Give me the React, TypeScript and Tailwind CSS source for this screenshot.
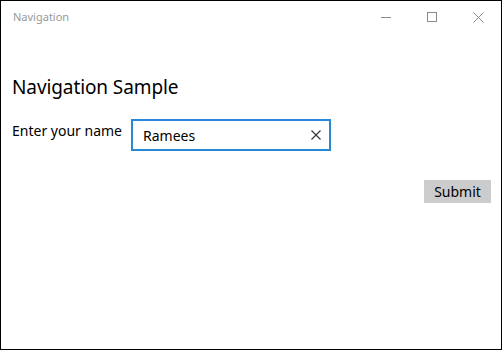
import React from "react";

export default function App() {
  return (
    <div
      className="w-[502px] h-[350px] border border-black bg-white flex flex-col"
      style={{ fontFamily: '"Noto Sans", "Open Sans", sans-serif' }}
    >
      <div className="h-[32px] flex items-center shrink-0">
        <div className="pl-[12px] text-[11px] text-[#999999] flex-1">Navigation</div>
        <div className="flex h-full">
          <div className="w-[46px] h-full flex items-center justify-center">
            <svg width="10" height="10" viewBox="0 0 10 10">
              <path d="M0 5.5H10" stroke="#8a8a8a" strokeWidth="1" />
            </svg>
          </div>
          <div className="w-[46px] h-full flex items-center justify-center">
            <svg width="10" height="10" viewBox="0 0 10 10">
              <rect x="0.5" y="0.5" width="9" height="9" fill="none" stroke="#8a8a8a" strokeWidth="1" />
            </svg>
          </div>
          <div className="w-[46px] h-full flex items-center justify-center">
            <svg width="11" height="11" viewBox="0 0 11 11">
              <path d="M0.5 0.5L10.5 10.5M10.5 0.5L0.5 10.5" stroke="#8a8a8a" strokeWidth="1" />
            </svg>
          </div>
        </div>
      </div>
      <div className="px-[11px] pt-[40px] flex flex-col">
        <div className="text-[19px] leading-[28px] text-black tracking-[-0.1px]">Navigation Sample</div>
        <div className="flex items-start mt-[18px]">
          <div className="text-[14px] leading-[20px] text-black w-[119px] pt-[2px]">Enter your name</div>
          <div className="w-[200px] h-[32px] border-2 border-[#2b88d8] flex items-center pl-[10px] pr-[8px]">
            <span className="flex-1 text-[14px] text-black">Ramees</span>
            <svg width="10" height="10" viewBox="0 0 10 10">
              <path d="M0.5 0.5L9.5 9.5M9.5 0.5L0.5 9.5" stroke="#333" strokeWidth="1.1" />
            </svg>
          </div>
        </div>
        <div className="flex justify-end mt-[29px]">
          <div className="w-[67px] h-[23px] bg-[#cccccc] flex items-center justify-center text-[14px] text-black mr-[-1px]">
            Submit
          </div>
        </div>
      </div>
    </div>
  );
}
